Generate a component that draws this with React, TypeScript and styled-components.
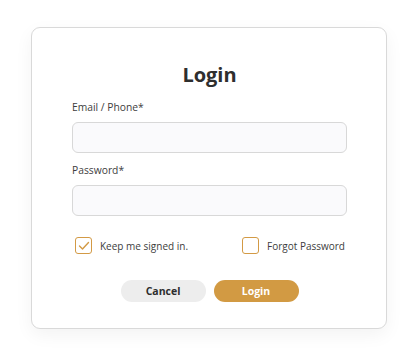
import React from "react";
import styled, { createGlobalStyle } from "styled-components";

const Global = createGlobalStyle`
  html, body { margin: 0; padding: 0; background: #ffffff; }
  body { font-family: "Open Sans", "Noto Sans", sans-serif; }
  * { box-sizing: border-box; }
`;

const Page = styled.div`
  width: 418px;
  height: 363px;
  padding: 27px 31px 0 31px;
`;

const Card = styled.div`
  width: 356px;
  height: 302px;
  background: #fff;
  border: 1px solid #d9d9d9;
  border-radius: 9px;
  box-shadow: 0 6px 18px rgba(0, 0, 0, 0.05);
  padding: 33px 39px 0 40px;
  display: flex;
  flex-direction: column;
`;

const Title = styled.h1`
  margin: 0;
  text-align: center;
  font-size: 20px;
  line-height: 28px;
  font-weight: 700;
  color: #2e2e2e;
`;

const Label = styled.label<{ $top: number }>`
  display: block;
  font-size: 10.3px;
  line-height: 15px;
  color: #3d3d3d;
  margin-top: ${(p) => p.$top}px;
  margin-bottom: 7px;
`;

const Input = styled.input`
  display: block;
  width: 100%;
  height: 31px;
  border: 1px solid #d8d8d8;
  border-radius: 6px;
  background: #fafafc;
  outline: none;
`;

const OptionsRow = styled.div`
  display: flex;
  justify-content: space-between;
  align-items: center;
  margin-top: 21px;
  padding-left: 3px;
  padding-right: 2px;
`;

const Option = styled.label`
  display: flex;
  align-items: center;
  gap: 8px;
  font-size: 10px;
  color: #3d3d3d;
`;

const Box = styled.span`
  width: 17px;
  height: 17px;
  border: 1.5px solid #d39a45;
  border-radius: 3px;
  display: flex;
  align-items: center;
  justify-content: center;
`;

const Buttons = styled.div`
  display: flex;
  justify-content: center;
  gap: 8px;
  margin-top: 26px;
`;

const Button = styled.button<{ $primary?: boolean }>`
  width: 85px;
  height: 22px;
  border: none;
  border-radius: 11px;
  font-family: inherit;
  font-size: 10.5px;
  font-weight: 700;
  background: ${(p) => (p.$primary ? "#d29a43" : "#ededed")};
  color: ${(p) => (p.$primary ? "#ffffff" : "#2e2e2e")};
  padding: 0;
`;

export default function App() {
  return (
    <>
      <Global />
      <Page>
        <Card>
          <Title>Login</Title>
          <Label $top={11}>Email / Phone*</Label>
          <Input />
          <Label $top={10}>Password*</Label>
          <Input type="password" />
          <OptionsRow>
            <Option>
              <Box>
                <svg width="12" height="10" viewBox="0 0 12 10">
                  <path d="M1.5 5 L4.5 8 L10.5 1.5" fill="none" stroke="#d39a45" strokeWidth="1.4" strokeLinecap="round" strokeLinejoin="round" />
                </svg>
              </Box>
              Keep me signed in.
            </Option>
            <Option>
              <Box />
              Forgot Password
            </Option>
          </OptionsRow>
          <Buttons>
            <Button>Cancel</Button>
            <Button $primary>Login</Button>
          </Buttons>
        </Card>
      </Page>
    </>
  );
}
